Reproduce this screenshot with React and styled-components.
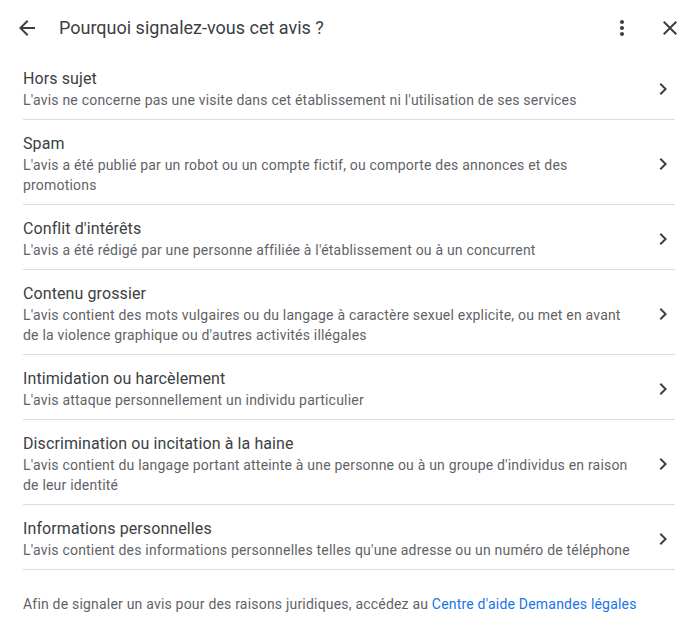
import React from 'react';
import styled, { createGlobalStyle } from 'styled-components';

const GlobalStyle = createGlobalStyle`
  body {
    margin: 0;
    background: #fff;
    font-family: Roboto, "Liberation Sans", Arial, sans-serif;
  }
`;

const Dialog = styled.div`
  width: 693px;
  min-height: 644px;
  background: #fff;
  display: flex;
  flex-direction: column;
`;

const Header = styled.header`
  flex-shrink: 0;
  height: 55px;
  display: flex;
  align-items: center;
  padding: 0 11px 0 15px;
  box-sizing: border-box;
`;

const IconButton = styled.button`
  width: 24px;
  height: 24px;
  padding: 0;
  border: 0;
  background: none;
  display: flex;
  align-items: center;
  justify-content: center;
  color: #3c4043;
  cursor: pointer;
  margin-left: ${(p) => p.$gap || 0}px;
`;

const Title = styled.h1`
  flex: 1;
  margin: 0 0 0 20px;
  font-size: 18px;
  font-weight: 400;
  color: #3c4043;
  line-height: 24px;
`;

const List = styled.ul`
  list-style: none;
  margin: 0;
  padding: 0 18px 0 23px;
`;

const Item = styled.li`
  display: flex;
  align-items: center;
  padding: 13px 0 9px;
  border-bottom: 1px solid #dadce0;
  cursor: pointer;
`;

const Texts = styled.div`
  flex: 1;
  padding-right: 20px;
`;

const ItemTitle = styled.div`
  font-size: 16px;
  line-height: 22px;
  letter-spacing: 0.1px;
  color: #3c4043;
`;

const ItemDesc = styled.div`
  font-size: 14px;
  line-height: 20px;
  letter-spacing: 0.2px;
  color: #5f6368;
`;

const Chevron = styled.span`
  width: 24px;
  height: 24px;
  display: flex;
  color: #3c4043;
`;

const Footer = styled.p`
  margin: 0;
  padding: 24px 23px;
  font-size: 14px;
  line-height: 20px;
  letter-spacing: 0.2px;
  color: #5f6368;
`;

const Link = styled.a`
  color: #1a73e8;
  text-decoration: none;
`;

const reasons = [
  {
    title: 'Hors sujet',
    desc: "L'avis ne concerne pas une visite dans cet établissement ni l'utilisation de ses services",
  },
  {
    title: 'Spam',
    desc: "L'avis a été publié par un robot ou un compte fictif, ou comporte des annonces et des promotions",
  },
  {
    title: "Conflit d'intérêts",
    desc: "L'avis a été rédigé par une personne affiliée à l'établissement ou à un concurrent",
  },
  {
    title: 'Contenu grossier',
    desc: "L'avis contient des mots vulgaires ou du langage à caractère sexuel explicite, ou met en avant de la violence graphique ou d'autres activités illégales",
  },
  {
    title: 'Intimidation ou harcèlement',
    desc: "L'avis attaque personnellement un individu particulier",
  },
  {
    title: 'Discrimination ou incitation à la haine',
    desc: "L'avis contient du langage portant atteinte à une personne ou à un groupe d'individus en raison de leur identité",
  },
  {
    title: 'Informations personnelles',
    desc: "L'avis contient des informations personnelles telles qu'une adresse ou un numéro de téléphone",
  },
];

const Svg = ({ d }) => (
  <svg width="24" height="24" viewBox="0 0 24 24" fill="currentColor">
    <path d={d} />
  </svg>
);

const ARROW_BACK = 'M20 11H7.83l5.59-5.59L12 4l-8 8 8 8 1.41-1.41L7.83 13H20v-2z';
const MORE_VERT =
  'M12 8c1.1 0 2-.9 2-2s-.9-2-2-2-2 .9-2 2 .9 2 2 2zm0 2c-1.1 0-2 .9-2 2s.9 2 2 2 2-.9 2-2-.9-2-2-2zm0 6c-1.1 0-2 .9-2 2s.9 2 2 2 2-.9 2-2-.9-2-2-2z';
const CLOSE =
  'M19 6.41L17.59 5 12 10.59 6.41 5 5 6.41 10.59 12 5 17.59 6.41 19 12 13.41 17.59 19 19 17.59 13.41 12z';
const CHEVRON = 'M10 6L8.59 7.41 13.17 12l-4.58 4.59L10 18l6-6z';

export default function App() {
  return (
    <Dialog>
      <GlobalStyle />
      <Header>
        <IconButton aria-label="Retour">
          <Svg d={ARROW_BACK} />
        </IconButton>
        <Title>Pourquoi signalez-vous cet avis ?</Title>
        <IconButton aria-label="Plus">
          <Svg d={MORE_VERT} />
        </IconButton>
        <IconButton aria-label="Fermer" $gap={24}>
          <Svg d={CLOSE} />
        </IconButton>
      </Header>
      <List>
        {reasons.map((r) => (
          <Item key={r.title}>
            <Texts>
              <ItemTitle>{r.title}</ItemTitle>
              <ItemDesc>{r.desc}</ItemDesc>
            </Texts>
            <Chevron>
              <Svg d={CHEVRON} />
            </Chevron>
          </Item>
        ))}
      </List>
      <Footer>
        Afin de signaler un avis pour des raisons juridiques, accédez au{' '}
        <Link href="#">Centre d'aide Demandes légales</Link>
      </Footer>
    </Dialog>
  );
}
